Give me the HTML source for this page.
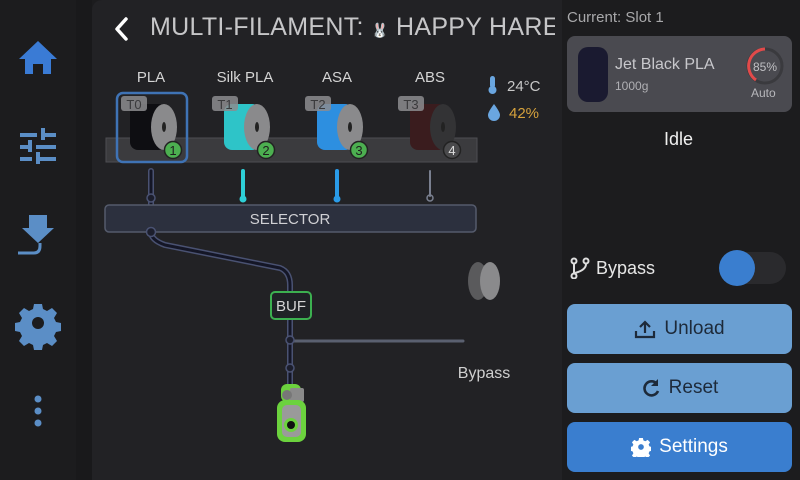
<!DOCTYPE html>
<html><head><meta charset="utf-8"><style>
*{margin:0;padding:0;box-sizing:border-box}
body{width:800px;height:480px;overflow:hidden;background:#1c1c1e;font-family:"Liberation Sans","DejaVu Sans",sans-serif;position:relative}
.main{position:absolute;left:92px;top:0;width:470px;height:480px;background:#222225;border-radius:10px 0 0 0}
.gap{position:absolute;left:76px;top:0;width:16px;height:480px;background:#19191b}
.t{position:absolute;white-space:nowrap}
.btn{position:absolute;left:567px;width:225px;height:50px;border-radius:8px;display:flex;align-items:center;justify-content:center;font-size:19px;gap:8px}
</style></head><body>
<div class="gap"></div>
<div class="main"></div>
<svg style="position:absolute;left:0;top:0" width="76" height="480">
 <path d="M38 41 L57 59 L51 59 L51 74 L43 74 L43 64 L33 64 L33 74 L25 74 L25 59 L19 59 Z" fill="#3a7bd5"/>
 <g fill="#5b8ec6">
  <rect x="20" y="133" width="17" height="4"/><rect x="45" y="133" width="11" height="4"/><rect x="41" y="128" width="4" height="12"/>
  <rect x="20" y="145" width="8" height="4"/><rect x="36" y="145" width="20" height="4"/><rect x="28" y="140" width="4" height="12"/>
  <rect x="20" y="157" width="12" height="4"/><rect x="40" y="157" width="16" height="4"/><rect x="36" y="152" width="4" height="12"/>
  <path d="M29 215 L47 215 L47 228 L54 228 L38 243 L22 228 L29 228 Z"/>
  <path d="M18 253 L34 253 Q40 253 40 246 L40 243" stroke="#5b8ec6" stroke-width="3" fill="none"/>
  <path d="M34 304h8l1 5 4 2 5-3 5 5-3 5 2 4 5 1v8l-5 1-2 4 3 5-5 5-5-3-4 2-1 5h-8l-1-5-4-2-5 3-5-5 3-5-2-4-5-1v-8l5-1 2-4-3-5 5-5 5 3 4-2z"/>
  <circle cx="38" cy="399" r="3.5"/><circle cx="38" cy="411" r="3.5"/><circle cx="38" cy="423" r="3.5"/>
 </g>
 <circle cx="38" cy="323" r="6" fill="#1c1c1e"/>
</svg>
<svg style="position:absolute;left:110px;top:16px" width="24" height="26"><path d="M16 3 L7 13 L16 23" stroke="#fff" stroke-width="3.5" fill="none" stroke-linecap="round" stroke-linejoin="round"/></svg>
<div class="t" style="left:150px;top:13px;width:405px;overflow:hidden;font-size:25px;color:#c6c6c8;letter-spacing:0.3px">MULTI-FILAMENT: <span style="font-size:14px;color:#888">🐰</span> HAPPY HARE</div>
<svg style="position:absolute;left:0;top:0" width="560" height="480" font-family="Liberation Sans, sans-serif">
 <g fill="#d4d4d4" font-size="15" text-anchor="middle">
  <text x="151" y="82">PLA</text><text x="245" y="82">Silk PLA</text><text x="337" y="82">ASA</text><text x="430" y="82">ABS</text>
 </g>
 <rect x="106" y="138" width="371" height="24" fill="#3b3b3e" stroke="#4e4e52"/>
 <g>
  <rect x="130" y="104" width="36" height="46" rx="8" fill="#0e0e12"/>
  <ellipse cx="164" cy="127" rx="13" ry="23" fill="#8a8a8c"/><ellipse cx="164" cy="127" rx="2" ry="5" fill="#222"/>
  <rect x="224" y="104" width="36" height="46" rx="8" fill="#2ec4c8"/>
  <ellipse cx="257" cy="127" rx="13" ry="23" fill="#8a8a8c"/><ellipse cx="257" cy="127" rx="2" ry="5" fill="#222"/>
  <rect x="317" y="104" width="36" height="46" rx="8" fill="#2d8fe0"/>
  <ellipse cx="350" cy="127" rx="13" ry="23" fill="#8a8a8c"/><ellipse cx="350" cy="127" rx="2" ry="5" fill="#222"/>
  <rect x="410" y="104" width="36" height="46" rx="8" fill="#3a1c1e"/>
  <ellipse cx="443" cy="127" rx="13" ry="23" fill="#333335"/><ellipse cx="443" cy="127" rx="2" ry="5" fill="#222"/>
 </g>
 <rect x="117" y="93" width="70" height="69" rx="6" fill="none" stroke="#3f73b5" stroke-width="2.5"/>
 <g fill="#8c8c8f" opacity=".85">
  <rect x="121" y="96" width="26" height="15" rx="3"/><rect x="212" y="96" width="26" height="15" rx="3"/><rect x="305" y="96" width="26" height="15" rx="3"/><rect x="398" y="96" width="26" height="15" rx="3"/>
 </g>
 <g fill="#3a3a3c" font-size="13" text-anchor="middle">
  <text x="134" y="109">T0</text><text x="225" y="109">T1</text><text x="318" y="109">T2</text><text x="411" y="109">T3</text>
 </g>
 <g stroke="#222" stroke-width="1.5">
  <circle cx="173" cy="150" r="8.5" fill="#4caf50"/><circle cx="266" cy="150" r="8.5" fill="#4caf50"/><circle cx="359" cy="150" r="8.5" fill="#4caf50"/><circle cx="452" cy="150" r="8.5" fill="#4a4a4c"/>
 </g>
 <g fill="#1e1e1e" font-size="13" text-anchor="middle"><text x="173" y="155">1</text><text x="266" y="155">2</text><text x="359" y="155">3</text><text x="452" y="155" fill="#ddd">4</text></g>
 <g stroke-linecap="round" fill="none">
  <line x1="243" y1="171" x2="243" y2="198" stroke="#2ed0d8" stroke-width="4"/><circle cx="243" cy="199" r="3.5" fill="#2ed0d8"/>
  <line x1="337" y1="171" x2="337" y2="198" stroke="#2a9be8" stroke-width="4"/><circle cx="337" cy="199" r="3.5" fill="#2a9be8"/>
  <line x1="430" y1="171" x2="430" y2="196" stroke="#7a8090" stroke-width="2"/><circle cx="430" cy="198" r="3" fill="none" stroke="#7a8090" stroke-width="1.5"/>
  <line x1="290" y1="341" x2="463" y2="341" stroke="#5a6070" stroke-width="3"/>
  <path d="M151 171 L151 232 Q151 240 165 245 L280 268 Q290 272 290 285 L290 400" stroke="#4a5272" stroke-width="6"/>
  <path d="M151 171 L151 232 Q151 240 165 245 L280 268 Q290 272 290 285 L290 400" stroke="#141626" stroke-width="3"/>
 </g>
 <rect x="105" y="205" width="371" height="27" rx="4" fill="#2c303e" stroke="#555b6c" stroke-width="1.5"/>
 <text x="290" y="224" fill="#d0d0d4" font-size="15" text-anchor="middle">SELECTOR</text>
 <g fill="#1c1e2c" stroke="#4a5272" stroke-width="1.5"><circle cx="151" cy="198" r="4"/><circle cx="151" cy="232" r="4.5"/><circle cx="290" cy="340" r="4"/><circle cx="290" cy="368" r="4"/></g>
 <rect x="271" y="292" width="40" height="27" rx="4" fill="#1f2226" stroke="#3cb050" stroke-width="2"/>
 <text x="291" y="311" fill="#d6d6d6" font-size="15" text-anchor="middle">BUF</text>
 <ellipse cx="478" cy="281" rx="10" ry="19" fill="#5a5a5c"/><ellipse cx="490" cy="281" rx="10" ry="19" fill="#8a8a8c"/>
 <text x="484" y="378" fill="#cfcfcf" font-size="16" text-anchor="middle">Bypass</text>
 <rect x="281" y="384" width="20" height="18" rx="6" fill="#6cd23e"/>
 <rect x="290" y="388" width="14" height="14" rx="2" fill="#8a8a8a"/>
 <circle cx="287" cy="395" r="5" fill="#777"/>
 <rect x="277" y="400" width="29" height="42" rx="8" fill="#6cd23e"/>
 <rect x="282" y="405" width="19" height="32" rx="5" fill="#9a9a9a"/>
 <circle cx="291" cy="425" r="7" fill="#6cd23e"/><circle cx="291" cy="425" r="4" fill="#111"/>
 <rect x="490" y="76" width="5" height="12" rx="2.5" fill="#6aa6e0"/><circle cx="492.5" cy="90" r="4" fill="#6aa6e0"/>
 <path d="M494 104 Q488 112 488 115 A6 6 0 0 0 500 115 Q500 112 494 104Z" fill="#6aa6e0"/>
 <text x="507" y="91" fill="#c8c8c8" font-size="15">24°C</text>
 <text x="509" y="118" fill="#d6a23c" font-size="15">42%</text>
</svg>
<div class="t" style="left:567px;top:9px;font-size:15px;color:#a8a8aa">Current: Slot 1</div>
<div style="position:absolute;left:567px;top:36px;width:225px;height:76px;border-radius:8px;background:#4a4a50"></div>
<div style="position:absolute;left:578px;top:47px;width:30px;height:55px;border-radius:10px;background:#1a1a30"></div>
<div class="t" style="left:615px;top:56px;font-size:16px;color:#c8c8cc">Jet Black PLA</div>
<div class="t" style="left:615px;top:79px;font-size:12px;color:#b0b0b4">1000g</div>
<svg style="position:absolute;left:744px;top:45px" width="42" height="42"><circle cx="21" cy="21" r="17" fill="none" stroke="#3a3a3e" stroke-width="3"/><path d="M21 4 A17 17 0 0 0 12 35" fill="none" stroke="#e24a4a" stroke-width="3"/><text x="21" y="26" font-size="12" fill="#c0c0c4" text-anchor="middle" font-family="Liberation Sans">85%</text></svg>
<div class="t" style="left:751px;top:86px;font-size:12px;color:#b8b8bc">Auto</div>
<div class="t" style="left:664px;top:129px;font-size:18px;color:#f0f0f0">Idle</div>
<svg style="position:absolute;left:569px;top:257px" width="22" height="22"><g stroke="#ddd" stroke-width="2" fill="none"><circle cx="5" cy="4" r="2.5"/><circle cx="17" cy="4" r="2.5"/><circle cx="5" cy="19" r="2.5"/><path d="M5 7v9M17 7q0 6-11 9"/></g></svg>
<div class="t" style="left:596px;top:258px;font-size:18px;color:#e6e6e6">Bypass</div>
<div style="position:absolute;left:722px;top:252px;width:64px;height:32px;border-radius:16px;background:#2a2a2d"></div>
<div style="position:absolute;left:719px;top:250px;width:36px;height:36px;border-radius:50%;background:#3a7ecf"></div>
<div class="btn" style="top:304px;background:#6a9fd2;color:#1d2a3a"><svg width="22" height="20"><path d="M2 12v6h18v-6M11 14V3M6 8l5-5 5 5" stroke="#1d2a3a" stroke-width="2.2" fill="none"/></svg>Unload</div>
<div class="btn" style="top:363px;background:#6a9fd2;color:#1d2a3a"><svg width="20" height="20"><path d="M16 6A7 7 0 1 0 17 13" stroke="#1d2a3a" stroke-width="2.6" fill="none"/><path d="M17 1v7h-7z" fill="#1d2a3a"/></svg>Reset</div>
<div class="btn" style="top:422px;background:#3a7ecf;color:#fff"><svg width="20" height="20" viewBox="17 302 42 42"><path fill="#fff" d="M34 304h8l1 5 4 2 5-3 5 5-3 5 2 4 5 1v8l-5 1-2 4 3 5-5 5-5-3-4 2-1 5h-8l-1-5-4-2-5 3-5-5 3-5-2-4-5-1v-8l5-1 2-4-3-5 5-5 5 3 4-2z"/><circle cx="38" cy="323" r="6" fill="#3a7ecf"/></svg>Settings</div>
</body></html>
